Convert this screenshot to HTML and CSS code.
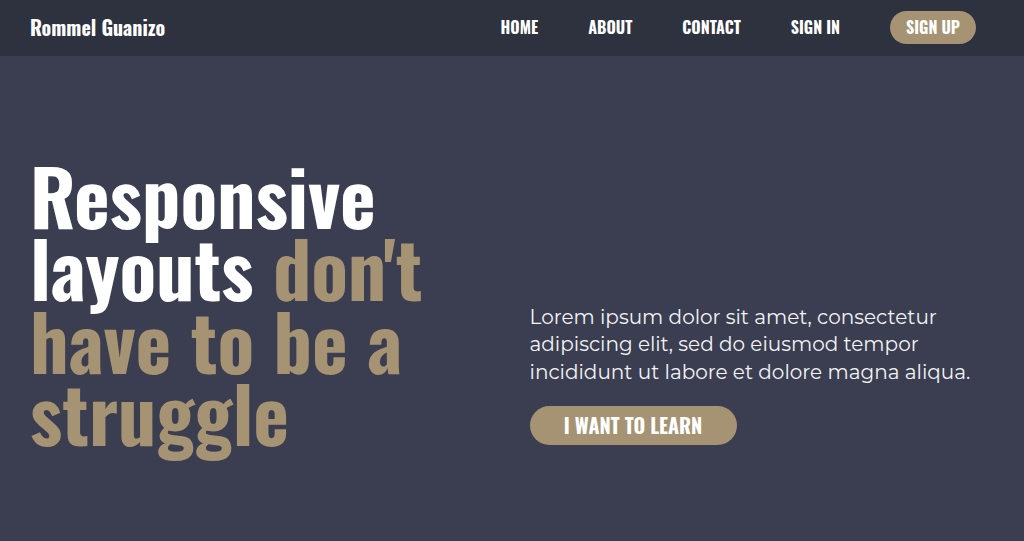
FILE: index.html
```html
<!DOCTYPE html>
<html lang="en">
<head>
<meta charset="utf-8">
<title>Rommel Guanizo</title>
<link rel="stylesheet" href="styles.css">
</head>
<body>
<header class="site-header">
  <div class="logo">Rommel Guanizo</div>
  <nav class="nav">
    <a class="nav-link" href="#">HOME</a>
    <a class="nav-link" href="#">ABOUT</a>
    <a class="nav-link" href="#">CONTACT</a>
    <a class="nav-link" href="#">SIGN IN</a>
    <a class="nav-btn" href="#">SIGN UP</a>
  </nav>
</header>
<main class="hero">
  <h1 class="headline">Responsive layouts <span class="accent">don't have to be a struggle</span></h1>
  <div class="hero-side">
    <p class="lead">Lorem ipsum dolor sit amet, consectetur adipiscing elit, sed do eiusmod tempor incididunt ut labore et dolore magna aliqua.</p>
    <a class="cta" href="#">I WANT TO LEARN</a>
  </div>
</main>
</body>
</html>
```

FILE: styles.css
```css
* { box-sizing: border-box; }
html, body { margin: 0; padding: 0; }
body {
  background: #3a3e50;
  color: #fff;
  font-family: "Montserrat", sans-serif;
  height: 541px;
  overflow: hidden;
}
.site-header {
  height: 56px;
  background: #2e313e;
  display: flex;
  align-items: center;
  justify-content: space-between;
  padding: 0 48px 2px 30px;
}
.logo {
  font-family: "Oswald", sans-serif;
  font-weight: 700;
  font-size: 20px;
}
.nav {
  display: flex;
  align-items: center;
  gap: 50px;
}
.nav-link, .nav-btn {
  font-family: "Oswald", sans-serif;
  font-weight: 700;
  font-size: 16px;
  color: #fff;
  text-decoration: none;
}
.nav-btn {
  background: #a59373;
  border-radius: 17px;
  padding: 6px 16px;
  line-height: 21px;
}
.hero {
  display: grid;
  grid-template-columns: 1fr 1fr;
  column-gap: 35px;
  padding: 10px 30px 0;
  height: 485px;
  align-items: center;
}
.headline {
  margin: 0;
  font-family: "Oswald", sans-serif;
  font-weight: 700;
  font-size: 76px;
  line-height: 72.5px;
}
.accent { color: #a59373; }
.hero-side {
  padding-top: 142px;
}
.lead {
  margin: 0 0 20px;
  font-size: 20px;
  line-height: 27.5px;
  color: #f3f3f6;
}
.cta {
  display: inline-block;
  background: #a59373;
  color: #fff;
  text-decoration: none;
  font-family: "Oswald", sans-serif;
  font-weight: 700;
  font-size: 20px;
  line-height: 39px;
  height: 39px;
  width: 207px;
  text-align: center;
  border-radius: 20px;
}
```
